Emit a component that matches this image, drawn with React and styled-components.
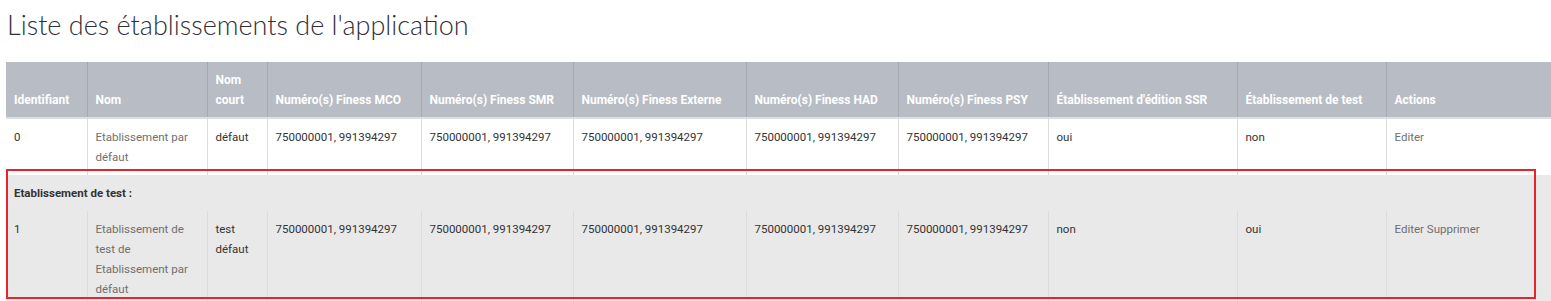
import React from "react";
import styled, { createGlobalStyle } from "styled-components";

const Global = createGlobalStyle`
  html, body { margin: 0; padding: 0; overflow: hidden; background: #fff; }
  body { font-family: Roboto, "Liberation Sans", sans-serif; color: #333; }
`;

const Page = styled.div`
  padding: 0 0 0 6px;
`;

const Title = styled.h2`
  margin: 0;
  padding: 7px 0 0 1px;
  height: 62px;
  box-sizing: border-box;
  font-family: Lato, Roboto, sans-serif;
  font-weight: 300;
  font-size: 27px;
  line-height: 36px;
  color: #2f2f38;
`;

const TableWrap = styled.div`
  position: relative;
`;

const Table = styled.table`
  table-layout: fixed;
  border-collapse: collapse;
  width: 1545px;
  font-size: 11.5px;
  line-height: 20px;
`;

const Th = styled.th`
  background: #b8bcc4;
  color: #fff;
  font-weight: 700;
  font-size: 12px;
  text-align: left;
  vertical-align: bottom;
  padding: 8px 8px 7px;
  border-left: 1px solid #a4a9b3;
  border-bottom: 2px solid #dcdee2;
  &:first-child { border-left: none; }
`;

const Tr = styled.tr`
  background: ${(p) => (p.$shaded ? "#e9e9e9" : "#fff")};
`;

const Td = styled.td`
  padding: 8px 8px;
  vertical-align: top;
  border-left: 1px solid #dcdcdc;
  color: ${(p) => (p.$muted ? "#6f6f6f" : "#333")};
  &:first-child { border-left: none; }
`;

const GroupCell = styled.td`
  padding: 8px 8px;
  font-weight: 700;
  color: #333;
`;

const Highlight = styled.div`
  position: absolute;
  left: 0;
  top: 107px;
  width: 1530px;
  height: 130px;
  box-sizing: border-box;
  border: 2px solid #e8232b;
  pointer-events: none;
`;

const cols = [81, 120, 60, 154, 152, 173, 152, 150, 189, 149, 165];
const heads = [
  "Identifiant",
  "Nom",
  "Nom court",
  "Numéro(s) Finess MCO",
  "Numéro(s) Finess SMR",
  "Numéro(s) Finess Externe",
  "Numéro(s) Finess HAD",
  "Numéro(s) Finess PSY",
  "Établissement d'édition SSR",
  "Établissement de test",
  "Actions",
];
const fin = "750000001, 991394297";

const Row = ({ shaded, id, name, short, ssr, test, actions }) => (
  <Tr $shaded={shaded}>
    <Td>{id}</Td>
    <Td $muted>{name}</Td>
    <Td>{short}</Td>
    <Td>{fin}</Td>
    <Td>{fin}</Td>
    <Td>{fin}</Td>
    <Td>{fin}</Td>
    <Td>{fin}</Td>
    <Td>{ssr}</Td>
    <Td>{test}</Td>
    <Td $muted>{actions}</Td>
  </Tr>
);

export default function App() {
  return (
    <Page>
      <Global />
      <Title>Liste des établissements de l'application</Title>
      <TableWrap>
        <Table>
          <colgroup>
            {cols.map((w, i) => (
              <col key={i} style={{ width: w }} />
            ))}
          </colgroup>
          <thead>
            <tr>
              {heads.map((h) => (
                <Th key={h}>{h}</Th>
              ))}
            </tr>
          </thead>
          <tbody>
            <Row
              id="0"
              name="Etablissement par défaut"
              short="défaut"
              ssr="oui"
              test="non"
              actions="Editer"
            />
            <Tr $shaded>
              <GroupCell colSpan={11}>Etablissement de test :</GroupCell>
            </Tr>
            <Row
              shaded
              id="1"
              name="Etablissement de test de Etablissement par défaut"
              short="test défaut"
              ssr="non"
              test="oui"
              actions="Editer Supprimer"
            />
          </tbody>
        </Table>
        <Highlight />
      </TableWrap>
    </Page>
  );
}
